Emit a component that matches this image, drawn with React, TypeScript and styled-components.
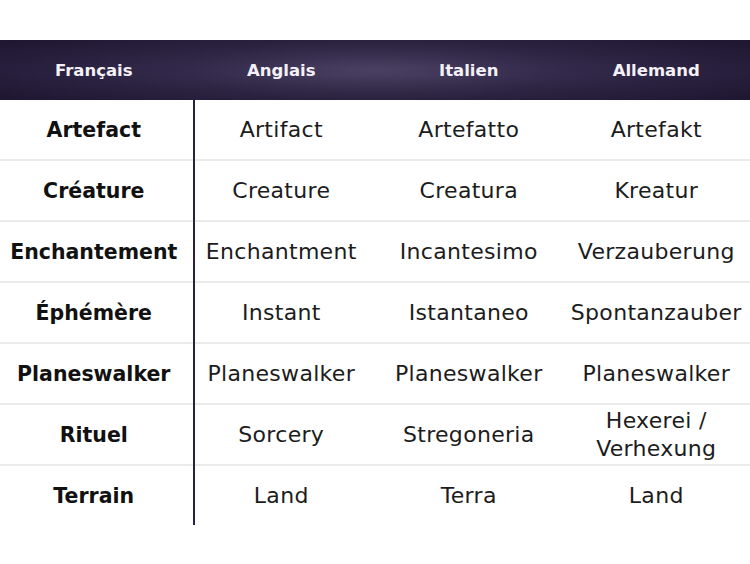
import styled, { createGlobalStyle } from "styled-components";

const GlobalStyle = createGlobalStyle`
  html, body {
    margin: 0;
    padding: 0;
    background: #ffffff;
  }
  body {
    font-family: "DejaVu Sans", "Liberation Sans", sans-serif;
  }
`;

const Page = styled.main`
  width: 750px;
  padding-top: 40px;
`;

const Header = styled.div`
  display: grid;
  grid-template-columns: repeat(4, 1fr);
  height: 60px;
  background:
    linear-gradient(to bottom, rgba(20, 14, 34, 0.35), rgba(20, 14, 34, 0) 45%, rgba(20, 14, 34, 0) 60%, rgba(20, 14, 34, 0.35)),
    radial-gradient(ellipse 55% 120% at 50% 50%, #4a4062 0%, #332a4b 45%, #241b39 100%);
`;

const HeadCell = styled.div`
  display: flex;
  align-items: center;
  justify-content: center;
  color: #f3f1f7;
  font-size: 16.5px;
  font-weight: 700;
`;

const Body = styled.div`
  position: relative;

  &::after {
    content: "";
    position: absolute;
    left: 193px;
    top: 0;
    bottom: 2px;
    width: 2px;
    background: #2a2142;
  }
`;

const Row = styled.div<{ $last?: boolean }>`
  display: grid;
  grid-template-columns: repeat(4, 1fr);
  height: 59px;
  border-bottom: 2px solid ${(p) => (p.$last ? "transparent" : "#ebebeb")};
`;

const Cell = styled.div<{ $head?: boolean }>`
  display: flex;
  align-items: center;
  justify-content: center;
  text-align: center;
  padding: 0 ${(p) => (p.$head ? "0" : "6px")};
  color: ${(p) => (p.$head ? "#111111" : "#1c1c1c")};
  font-size: ${(p) => (p.$head ? "20.5px" : "22px")};
  font-weight: ${(p) => (p.$head ? 700 : 400)};
  letter-spacing: ${(p) => (p.$head ? "0" : "0.3px")};
  line-height: 28px;
  white-space: ${(p) => (p.$head ? "nowrap" : "normal")};
`;

const headers = ["Français", "Anglais", "Italien", "Allemand"];

const rows = [
  ["Artefact", "Artifact", "Artefatto", "Artefakt"],
  ["Créature", "Creature", "Creatura", "Kreatur"],
  ["Enchantement", "Enchantment", "Incantesimo", "Verzauberung"],
  ["Éphémère", "Instant", "Istantaneo", "Spontanzauber"],
  ["Planeswalker", "Planeswalker", "Planeswalker", "Planeswalker"],
  ["Rituel", "Sorcery", "Stregoneria", "Hexerei / Verhexung"],
  ["Terrain", "Land", "Terra", "Land"],
];

function App() {
  return (
    <>
      <GlobalStyle />
      <Page>
        <Header>
          {headers.map((h) => (
            <HeadCell key={h}>{h}</HeadCell>
          ))}
        </Header>
        <Body>
          {rows.map((r, i) => (
            <Row key={r[0]} $last={i === rows.length - 1}>
              {r.map((c, j) => (
                <Cell key={j} $head={j === 0}>
                  {c}
                </Cell>
              ))}
            </Row>
          ))}
        </Body>
      </Page>
    </>
  );
}

export default App;
